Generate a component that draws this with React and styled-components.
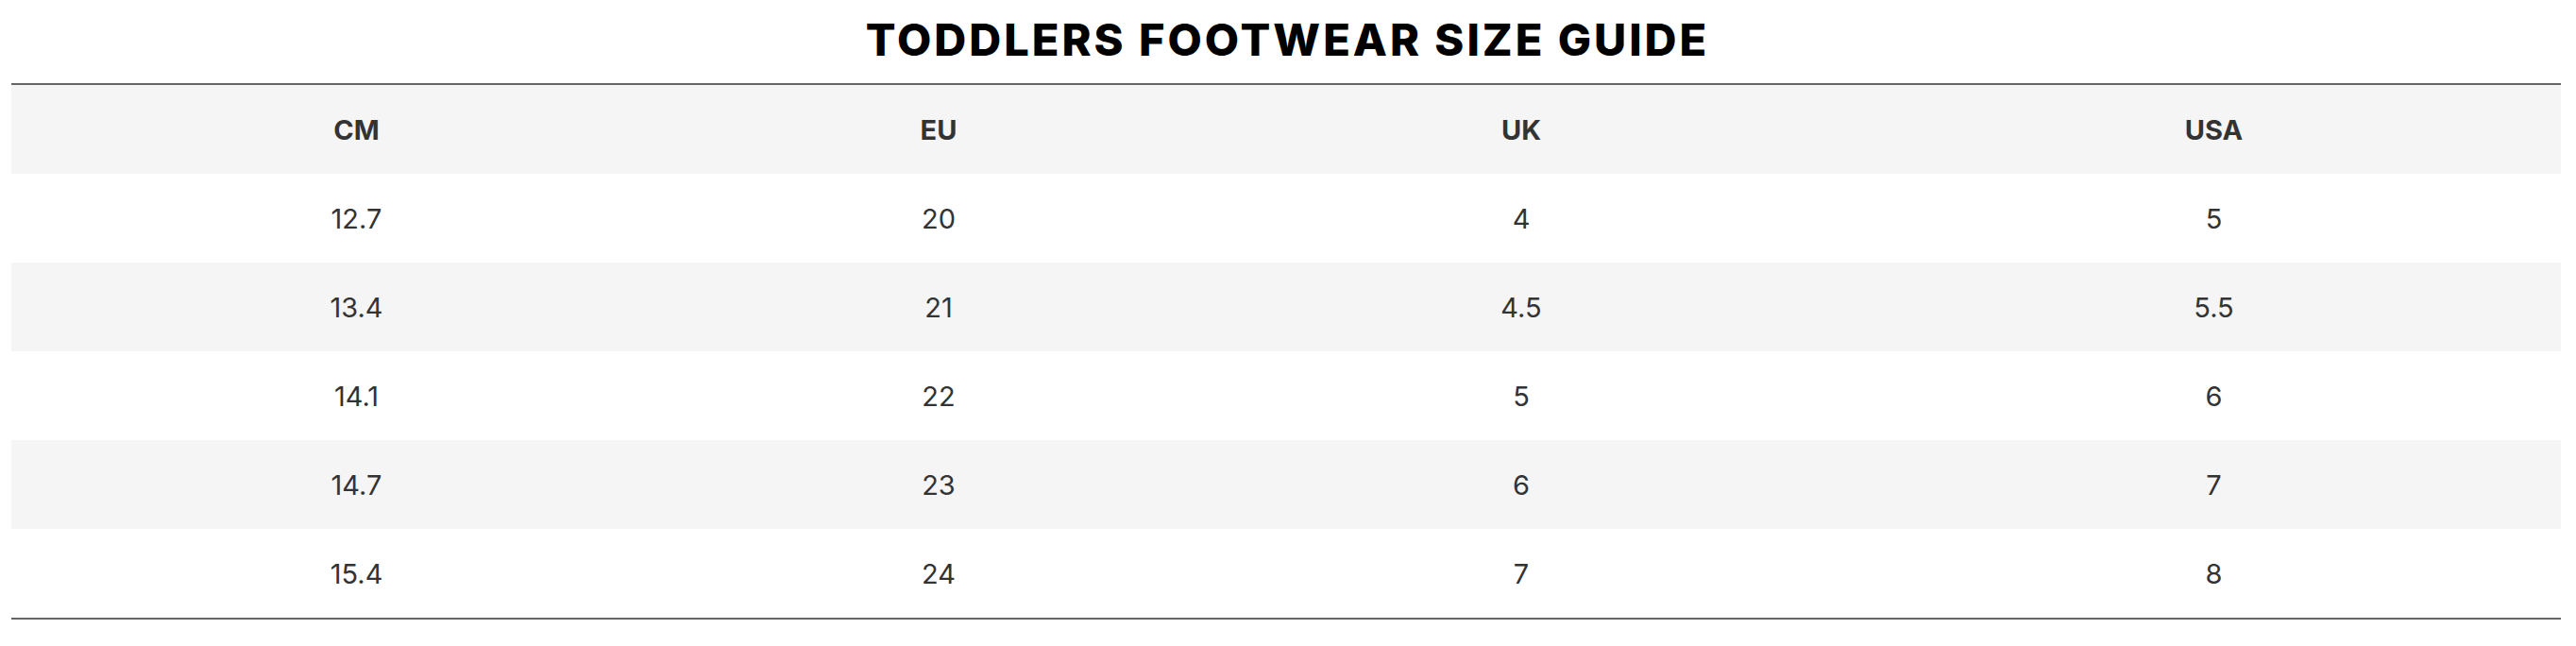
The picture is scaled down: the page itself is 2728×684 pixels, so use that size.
import React from "react";
import styled, { createGlobalStyle } from "styled-components";

const GlobalStyle = createGlobalStyle`
  html, body {
    margin: 0;
    padding: 0;
    background: #ffffff;
  }
  body {
    font-family: Inter, "Open Sans", "Liberation Sans", sans-serif;
  }
`;

const Page = styled.div`
  padding: 0 16px 0 12px;
`;

const Title = styled.h2`
  margin: 0;
  height: 88px;
  display: flex;
  align-items: center;
  justify-content: center;
  padding-bottom: 6px;
  padding-left: 3px;
  box-sizing: border-box;
  font-family: Inter, "Open Sans", sans-serif;
  font-weight: 800;
  font-size: 47px;
  letter-spacing: 3px;
  color: #000000;
  text-transform: uppercase;
`;

const Table = styled.div`
  border-top: 2px solid #666666;
  border-bottom: 2px solid #666666;
`;

const Row = styled.div`
  display: grid;
  grid-template-columns: 731fr 502fr 732fr 735fr;
  height: 94px;
  background: ${(p) => (p.$shaded ? "#f5f5f5" : "#ffffff")};
`;

const Cell = styled.div`
  display: flex;
  align-items: center;
  justify-content: center;
  font-family: Inter, "Open Sans", sans-serif;
  font-size: 29px;
  font-weight: ${(p) => (p.$head ? 700 : 400)};
  color: #333333;
`;

const headers = ["CM", "EU", "UK", "USA"];
const rows = [
  ["12.7", "20", "4", "5"],
  ["13.4", "21", "4.5", "5.5"],
  ["14.1", "22", "5", "6"],
  ["14.7", "23", "6", "7"],
  ["15.4", "24", "7", "8"],
];

export default function App() {
  return (
    <>
      <GlobalStyle />
      <Page>
        <Title>Toddlers Footwear Size Guide</Title>
        <Table>
          <Row $shaded>
            {headers.map((h) => (
              <Cell key={h} $head>
                {h}
              </Cell>
            ))}
          </Row>
          {rows.map((r, i) => (
            <Row key={i} $shaded={i % 2 === 1}>
              {r.map((c, j) => (
                <Cell key={j}>{c}</Cell>
              ))}
            </Row>
          ))}
        </Table>
      </Page>
    </>
  );
}
